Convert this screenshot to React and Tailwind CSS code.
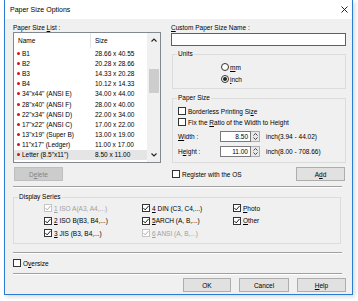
import React from "react";

// filas de la lista de tamaños
const rows = [
  ["B1", "28.66 x 40.55"],
  ["B2", "20.28 x 28.66"],
  ["B3", "14.33 x 20.28"],
  ["B4", "10.12 x 14.33"],
  ['34"x44" (ANSI E)', "34.00 x 44.00"],
  ['28"x40" (ANSI F)', "28.00 x 40.00"],
  ['22"x34" (ANSI D)', "22.00 x 34.00"],
  ['17"x22" (ANSI C)', "17.00 x 22.00"],
  ['13"x19" (Super B)', "13.00 x 19.00"],
  ['11"x17" (Ledger)', "11.00 x 17.00"],
  ['Letter (8.5"x11")', "8.50 x 11.00"],
];

const Check = ({ checked, disabled }) => (
  <span
    className={`flex h-[8px] w-[8px] shrink-0 items-center justify-center border bg-white ${
      disabled ? "border-[#c4c4c4]" : "border-[#333333]"
    }`}
  >
    {checked && (
      <svg width="6" height="6" viewBox="0 0 6 6">
        <path d="M0.4 3 L2.2 4.9 L5.6 0.9" fill="none" stroke={disabled ? "#b0b0b0" : "#222"} strokeWidth="1" />
      </svg>
    )}
  </span>
);

const Radio = ({ checked }) => (
  <span className="flex h-[8px] w-[8px] shrink-0 items-center justify-center rounded-full border border-[#333333] bg-white">
    {checked && <span className="h-[4px] w-[4px] rounded-full bg-[#222]" />}
  </span>
);

const Btn = ({ children, className = "" }) => (
  <div className={`flex h-[14px] items-center justify-center border border-[#adadad] bg-[#e1e1e1] ${className}`}>
    {children}
  </div>
);

const Sep = ({ className = "" }) => (
  <div className={`h-[2px] border-t border-b border-t-[#a0a0a0] border-b-white ${className}`} />
);

const Spin = () => (
  <div className="flex h-[11px] w-[9px] flex-col border border-l-0 border-[#adadad] bg-[#e8e8e8]">
    <div className="flex flex-1 items-center justify-center">
      <svg width="5" height="3" viewBox="0 0 5 3"><path d="M0.5 2.5 L2.5 0.5 L4.5 2.5" fill="none" stroke="#333" strokeWidth="0.9" /></svg>
    </div>
    <div className="flex flex-1 items-center justify-center">
      <svg width="5" height="3" viewBox="0 0 5 3"><path d="M0.5 0.5 L2.5 2.5 L4.5 0.5" fill="none" stroke="#333" strokeWidth="0.9" /></svg>
    </div>
  </div>
);

const SeriesItem = ({ num, label, checked = true, disabled }) => (
  <div className="flex h-[12.5px] items-center gap-[2px]">
    <Check checked={checked} disabled={disabled} />
    <span className={disabled ? "text-[#a0a0a0]" : "text-black"}>
      <span className="underline">{num}</span>
      {label}
    </span>
  </div>
);

export default function App() {
  return (
    <div className="h-[301px] w-[358px] overflow-hidden bg-white font-['Liberation_Sans',Arial,sans-serif] text-[6.5px] leading-[9px] text-black">
      <div className="ml-[4px] flex h-[295px] w-[349px] flex-col border border-t-0 border-[#2b7bd1] shadow-[2px_2px_4px_rgba(0,0,0,0.15)]">
        {/* barra de título */}
        <div className="flex h-[19px] items-center justify-between bg-white pl-[5px] pr-[4px]">
          <span className="text-[7px]">Paper Size Options</span>
          <svg width="7" height="7" viewBox="0 0 7 7">
            <path d="M0.5 0.5 L6.5 6.5 M6.5 0.5 L0.5 6.5" stroke="#111" strokeWidth="0.9" />
          </svg>
        </div>

        <div className="flex flex-1 flex-col bg-[#f0f0f0] pl-[8px] pr-[5px] pt-[4px]">
          {/* parte superior */}
          <div className="flex gap-[10px]">
            {/* columna izquierda */}
            <div className="flex w-[148px] flex-col">
              <div className="h-[9px]">
                Paper Size <span className="underline">L</span>ist :
              </div>
              <div className="flex h-[131px] border border-[#828790] bg-white">
                <div className="flex w-[133px] flex-col">
                  <div className="flex h-[15px] items-center">
                    <span className="w-[76px] pl-[4px]">Name</span>
                    <span className="h-full w-px bg-[#e5e5e5]" />
                    <span className="pl-[4px]">Size</span>
                  </div>
                  {rows.map(([name, size], i) => (
                    <div
                      key={name}
                      className={`flex h-[10.2px] items-center ${i === rows.length - 1 ? "bg-[#e5e5e5]" : ""}`}
                    >
                      <span className="ml-[3px] mr-[2px] h-[3px] w-[3px] rounded-full bg-[#d4141c]" />
                      <span className="w-[73px]">{name}</span>
                      <span>{size}</span>
                    </div>
                  ))}
                </div>
                <div className="flex w-[13px] flex-col items-center bg-[#f0f0f0]">
                  <div className="flex h-[14px] items-center justify-center">
                    <svg width="6" height="4" viewBox="0 0 6 4"><path d="M0.5 3.5 L3 1 L5.5 3.5" fill="none" stroke="#222" strokeWidth="1.1" /></svg>
                  </div>
                  <div className="mt-[22px] h-[24px] w-[10px] bg-[#cdcdcd]" />
                  <div className="flex-1" />
                  <div className="flex h-[14px] items-center justify-center">
                    <svg width="6" height="4" viewBox="0 0 6 4"><path d="M0.5 0.5 L3 3 L5.5 0.5" fill="none" stroke="#222" strokeWidth="1.1" /></svg>
                  </div>
                </div>
              </div>
              <div className="ml-[1px] mt-[4px] flex h-[14px] w-[49px] items-center justify-center border border-[#bfbfbf] bg-[#cccccc] text-[#838383]">
                D<span className="underline">e</span>lete
              </div>
            </div>

            {/* columna derecha */}
            <div className="flex w-[175px] flex-col">
              <div className="h-[9px]">
                <span className="underline">C</span>ustom Paper Size Name :
              </div>
              <div className="mt-[1px] h-[13px] border border-[#0078d7] bg-white" />

              <fieldset className="ml-[1px] mt-[4px] h-[39px] border border-[#dcdcdc] pl-[4px]">
                <legend className="px-[1px] leading-[8px]">Units</legend>
                <div className="ml-[44px] mt-[4px] flex flex-col gap-[2px]">
                  <div className="flex h-[10px] items-center gap-[1px]">
                    <Radio />
                    <span>
                      <span className="underline">m</span>m
                    </span>
                  </div>
                  <div className="flex h-[10px] items-center gap-[1px]">
                    <Radio checked />
                    <span>
                      <span className="underline">i</span>nch
                    </span>
                  </div>
                </div>
              </fieldset>

              <fieldset className="ml-[1px] mt-[5px] h-[69px] border border-[#dcdcdc] pl-[4px]">
                <legend className="px-[1px] leading-[8px]">Paper Size</legend>
                <div className="ml-[1px] mt-[4px] flex h-[10px] items-center gap-[2px]">
                  <Check />
                  <span>
                    Borderless Printing Si<span className="underline">z</span>e
                  </span>
                </div>
                <div className="ml-[1px] mt-[1px] flex h-[10px] items-center gap-[2px]">
                  <Check />
                  <span>
                    Fix the <span className="underline">R</span>atio of the Width to Height
                  </span>
                </div>
                <div className="ml-[1px] mt-[4px] flex h-[11px] items-center">
                  <span className="w-[42px]">
                    <span className="underline">W</span>idth :
                  </span>
                  <div className="flex h-[11px] w-[31px] items-center justify-end border border-[#7a7a7a] bg-white pr-[2px]">8.50</div>
                  <Spin />
                  <span className="ml-[6px]">inch(3.94 - 44.02)</span>
                </div>
                <div className="ml-[1px] mt-[4px] flex h-[11px] items-center">
                  <span className="w-[42px]">
                    H<span className="underline">e</span>ight :
                  </span>
                  <div className="flex h-[11px] w-[31px] items-center justify-end border border-[#7a7a7a] bg-white pr-[2px]">11.00</div>
                  <Spin />
                  <span className="ml-[6px]">inch(8.00 - 708.66)</span>
                </div>
              </fieldset>

              <div className="mt-[4px] flex items-center justify-between">
                <div className="ml-[1px] flex items-center gap-[2px]">
                  <Check />
                  <span>
                    Re<span className="underline">g</span>ister with the OS
                  </span>
                </div>
                <Btn className="mr-[1px] w-[49px]">
                  A<span className="underline">d</span>d
                </Btn>
              </div>
            </div>
          </div>

          <Sep className="mr-[5px] mt-[5px]" />

          <fieldset className="mr-[6px] mt-[5px] h-[51px] border border-[#dcdcdc] pl-[4px]">
            <legend className="px-[1px] leading-[8px]">Display Series</legend>
            <div className="ml-[26px] mt-[1px] grid grid-cols-[98px_91px_60px]">
              <SeriesItem num="1" label=" ISO A(A3, A4,...)" disabled />
              <SeriesItem num="4" label=" DIN (C3, C4,...)" />
              <div className="flex h-[12.5px] items-center gap-[2px]">
                <Check checked />
                <span>
                  <span className="underline">P</span>hoto
                </span>
              </div>
              <SeriesItem num="2" label=" ISO B(B3, B4,...)" />
              <SeriesItem num="5" label="ARCH (A, B,...)" />
              <div className="flex h-[12.5px] items-center gap-[2px]">
                <Check checked />
                <span>
                  <span className="underline">O</span>ther
                </span>
              </div>
              <SeriesItem num="3" label=" JIS (B3, B4,...)" />
              <SeriesItem num="6" label=" ANSI (A, B,...)" disabled />
            </div>
          </fieldset>

          <Sep className="mr-[5px] mt-[8px]" />

          <div className="mt-[4px] flex h-[10px] items-center gap-[2px]">
            <Check />
            <span>
              O<span className="underline">v</span>ersize
            </span>
          </div>

          <Sep className="mr-[5px] mt-[5px]" />

          <div className="mr-[1px] mt-[3px] flex justify-end gap-[8px]">
            <Btn className="w-[48px] border-[#0078d7]">OK</Btn>
            <Btn className="w-[50px]">Cancel</Btn>
            <Btn className="w-[49px]">
              <span className="underline">H</span>elp
            </Btn>
          </div>
        </div>
      </div>
    </div>
  );
}
